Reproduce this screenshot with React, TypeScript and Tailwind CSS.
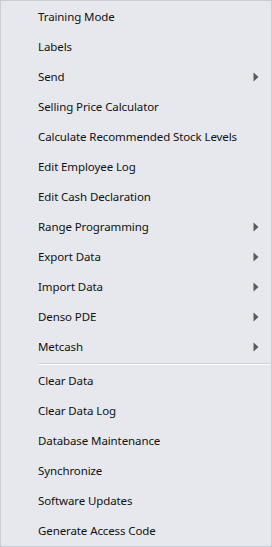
const GROUP_ONE = [
  { label: "Training Mode" },
  { label: "Labels" },
  { label: "Send", sub: true },
  { label: "Selling Price Calculator" },
  { label: "Calculate Recommended Stock Levels" },
  { label: "Edit Employee Log" },
  { label: "Edit Cash Declaration" },
  { label: "Range Programming", sub: true },
  { label: "Export Data", sub: true },
  { label: "Import Data", sub: true },
  { label: "Denso PDE", sub: true },
  { label: "Metcash", sub: true },
]

const GROUP_TWO = [
  { label: "Clear Data" },
  { label: "Clear Data Log" },
  { label: "Database Maintenance" },
  { label: "Synchronize" },
  { label: "Software Updates" },
  { label: "Generate Access Code" },
]

const Arrow = () => (
  <svg width="6" height="10" viewBox="0 0 6 10" className="block">
    <path d="M0.5 0.5 L5.5 5 L0.5 9.5 Z" fill="#5a5a5a" />
  </svg>
)

const MenuItem = ({ label, sub }: { label: string; sub?: boolean }) => (
  <div className="flex h-[30px] items-center pl-[37px] pr-[12px]">
    <span className="flex-1 text-[11.5px] tracking-[-0.1px] text-[#111]">{label}</span>
    {sub && <Arrow />}
  </div>
)

export default function App() {
  return (
    <div
      className="h-[547px] w-[272px] border border-[#c9ccd6] bg-[#e6e8ee] py-px"
      style={{ fontFamily: '"Noto Sans", "Open Sans", sans-serif' }}
    >
      {GROUP_ONE.map((item) => (
        <MenuItem key={item.label} {...item} />
      ))}
      {/* separator */}
      <div className="ml-[37px] mr-px py-px">
        <div className="border-t border-b border-t-[#cdd0d8] border-b-white" />
      </div>
      {GROUP_TWO.map((item) => (
        <MenuItem key={item.label} {...item} />
      ))}
    </div>
  )
}
